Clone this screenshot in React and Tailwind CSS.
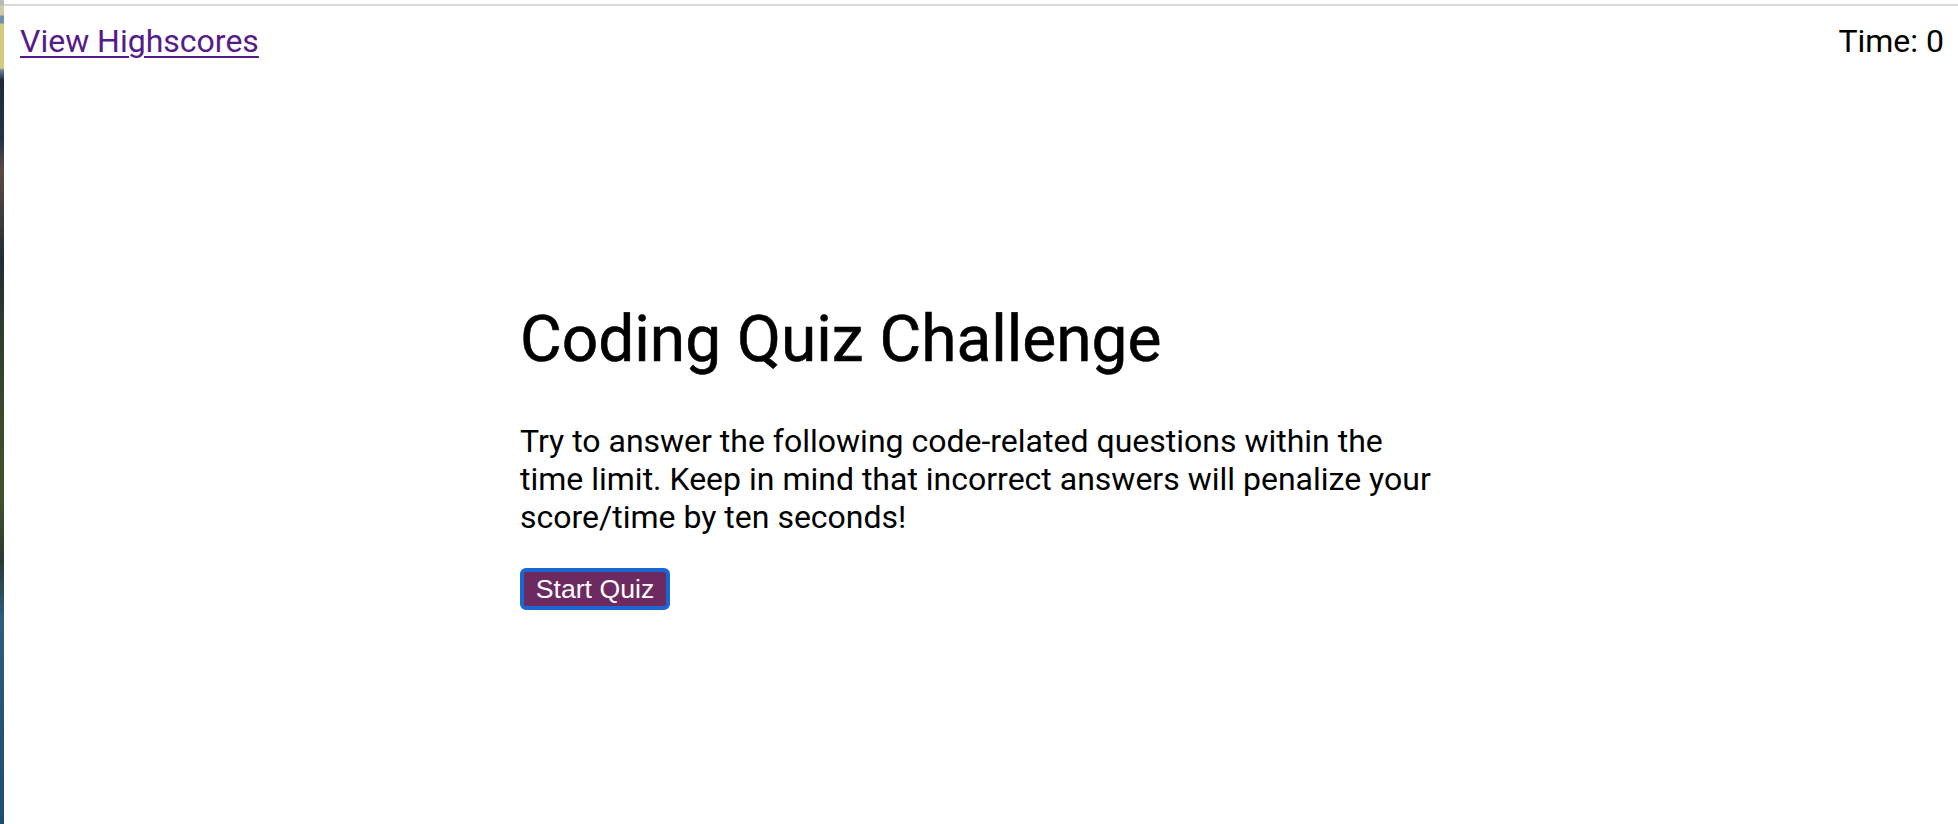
import React from 'react'

function App() {
  return (
    <div className="flex min-h-[824px] w-full bg-white font-['Roboto',sans-serif] text-black">
      {/* sliver of desktop wallpaper on the left edge */}
      <div className="w-[4px] shrink-0 bg-[linear-gradient(to_bottom,#b9b9b9_0px,#b9b9b9_5px,#cfc9a6_6px,#cfc9a6_15px,#6f8fae_16px,#6f8fae_23px,#d6c97f_24px,#d6c97f_68px,#6d86a0_70px,#1e2a3a_80px,#233246_140px,#5b4a44_170px,#3e3a3c_220px,#1f2c34_260px,#2c3a30_320px,#3d4a2a_420px,#45502c_500px,#2a3a34_560px,#2e5d82_620px,#245477_720px,#1f4e74_824px)]" />

      <div className="flex flex-1 flex-col">
        <div className="h-[4px]" />
        <div className="h-[2px] bg-[#d9d9d9]" />

        {/* Header */}
        <header className="flex items-start justify-between pl-4 pr-[14px] pt-4 text-[32px] leading-[normal]">
          <a href="#" className="text-[#551a8b] underline decoration-[2px] underline-offset-[4px]">
            View Highscores
          </a>
          <span>Time: 0</span>
        </header>

        {/* Main Content */}
        <main className="mx-auto mt-[242px] w-[922px]">
          <h1 className="text-[64px] font-normal leading-[normal] [-webkit-text-stroke:0.6px_black]">Coding Quiz Challenge</h1>
          <p className="mt-[45px] text-[32px] leading-[normal]">
            Try to answer the following code-related questions within the time limit. Keep in mind that incorrect
            answers will penalize your score/time by ten seconds!
          </p>
          <button className="mt-[32px] flex h-[42px] w-[150px] items-center justify-center rounded-[6px] border-[4px] border-[#1a66d3] bg-[#6d2a61] font-['Liberation_Sans',Arial,sans-serif] text-[26.67px] leading-none text-white">
            Start Quiz
          </button>
        </main>
      </div>
    </div>
  )
}

export default App
